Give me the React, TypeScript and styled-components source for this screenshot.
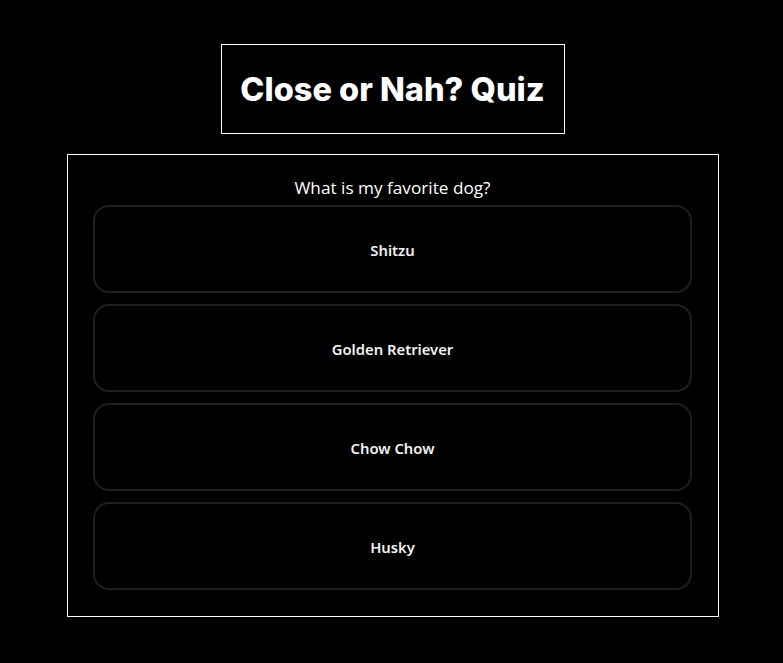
import React from "react";
import styled, { createGlobalStyle } from "styled-components";

const Global = createGlobalStyle`
  html, body { margin: 0; padding: 0; background: #000; }
  body { font-family: "Inter", "Noto Sans", sans-serif; color: #fff; }
`;

const Page = styled.div`
  display: flex;
  flex-direction: column;
  align-items: center;
  padding-top: 44px;
  padding-left: 2px;
  gap: 20px;
`;

const TitleBox = styled.div`
  box-sizing: border-box;
  width: 344px;
  height: 90px;
  border: 1px solid #fff;
  display: flex;
  align-items: center;
  justify-content: center;
`;

const Title = styled.h1`
  margin: 0;
  font-family: "Inter", sans-serif;
  font-weight: 800;
  font-size: 32.5px;
  letter-spacing: 0;
  color: #fff;
`;

const Card = styled.div`
  box-sizing: border-box;
  width: 652px;
  border: 1px solid #fff;
  padding: 21px 26px 26px;
  display: flex;
  flex-direction: column;
  align-items: center;
`;

const Question = styled.p`
  margin: 0 0 5px;
  font-family: "Open Sans", "Inter", sans-serif;
  font-size: 17.2px;
  line-height: 24px;
  color: #fff;
`;

const Options = styled.div`
  display: flex;
  flex-direction: column;
  gap: 11px;
  width: 599px;
`;

const Option = styled.button`
  box-sizing: border-box;
  height: 88px;
  width: 100%;
  padding: 2px 0 0;
  background: #000;
  border: 2px solid #1f1f1f;
  border-radius: 16px;
  color: #f2f2f2;
  font-family: "Noto Sans", "Open Sans", sans-serif;
  font-weight: 600;
  font-size: 14.8px;
  cursor: pointer;
`;

const options = ["Shitzu", "Golden Retriever", "Chow Chow", "Husky"];

export default function App() {
  return (
    <>
      <Global />
      <Page>
        <TitleBox>
          <Title>Close or Nah? Quiz</Title>
        </TitleBox>
        <Card>
          <Question>What is my favorite dog?</Question>
          <Options>
            {options.map((o) => (
              <Option key={o}>{o}</Option>
            ))}
          </Options>
        </Card>
      </Page>
    </>
  );
}
